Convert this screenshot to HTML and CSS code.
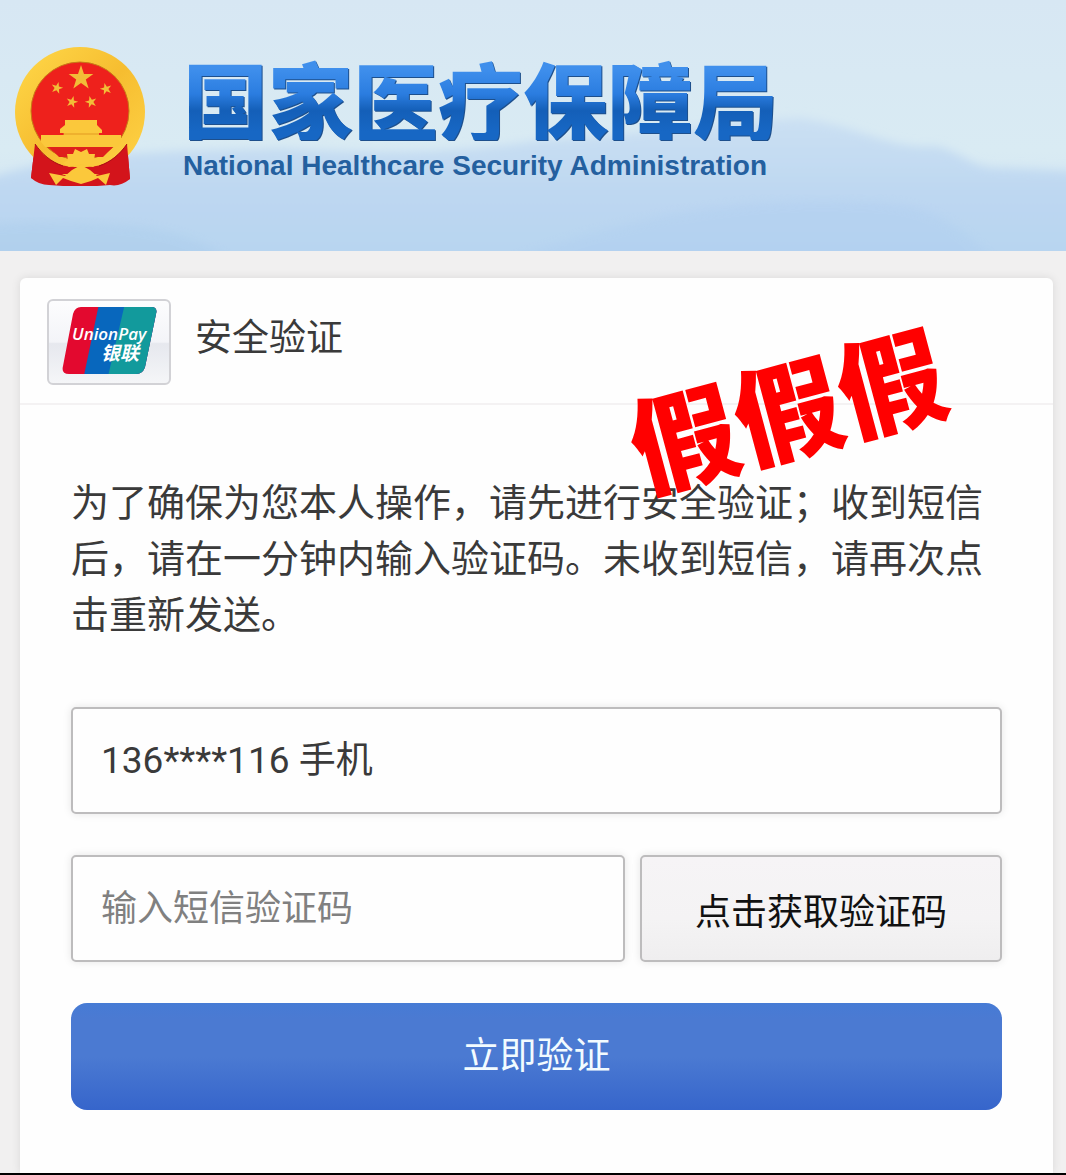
FILE: index.html
```
<!DOCTYPE html>
<html lang="zh-CN">
<head>
  <meta charset="UTF-8">
  <meta name="viewport" content="width=device-width, initial-scale=1.0">
  <title>假假假</title>
  <link rel="stylesheet" href="styles.css">
</head>
<body>
  <header class="header">
    <!-- Hills behind the title -->
    <svg class="hills" viewBox="0 0 1066 251" preserveAspectRatio="none" aria-hidden="true">
      <defs>
        <linearGradient id="hill" x1="0" y1="0" x2="0" y2="1">
          <stop offset="0" stop-color="#cbe0f3"/>
          <stop offset=".5" stop-color="#bdd7f1"/>
          <stop offset="1" stop-color="#b5d4f0"/>
        </linearGradient>
        <filter id="soft"><feGaussianBlur stdDeviation="5"/></filter>
      </defs>
      <path d="M-20 182 C60 150 170 152 280 148 C400 156 480 150 540 140 C640 134 730 122 800 118 C860 126 890 150 935 146 C965 152 970 170 1005 168 L1090 172 V275 H-20Z" fill="url(#hill)" filter="url(#soft)"/>
      <path d="M-20 225 C80 217 190 220 235 265 H-20Z" fill="#a9cbeb" opacity=".4" filter="url(#soft)"/>
      <path d="M500 265 C620 215 760 195 860 202 C930 200 960 225 1000 265Z" fill="#aecdf0" opacity=".4" filter="url(#soft)"/>
    </svg>
    <svg class="emblem" viewBox="0 0 132 142" aria-hidden="true">
      <defs>
        <linearGradient id="gold" x1="0" y1="0" x2="1" y2="1">
          <stop offset="0" stop-color="#ffd94a"/>
          <stop offset=".5" stop-color="#f6bd30"/>
          <stop offset="1" stop-color="#ffd447"/>
        </linearGradient>
        <path id="star" d="M0-10 2.3-3.1H9.5L3.7 1.2 5.9 8.1 0 3.8-5.9 8.1-3.7 1.2-9.5-3.1H-2.3Z"/>
      </defs>
      <path d="M20 98 L112 98 L115 133 Q105 141 95 139 L82 140 H48 L34 139 Q24 139 16 132Z" fill="#d3141b"/>
      <ellipse cx="65" cy="66" rx="65" ry="65" fill="url(#gold)"/>
      <circle cx="65" cy="65" r="49" fill="#ee211c" stroke="#c77b17" stroke-width="1"/>
      <g fill="#f2bd38">
        <use href="#star" transform="translate(66 32) scale(1.3)"/>
        <use href="#star" transform="translate(42 42) rotate(15) scale(.62)"/>
        <use href="#star" transform="translate(91 43) rotate(-15) scale(.62)"/>
        <use href="#star" transform="translate(57 56) rotate(15) scale(.62)"/>
        <use href="#star" transform="translate(76 56) rotate(-15) scale(.62)"/>
      </g>
      <path d="M50 74 H82 V79 L87 84 V87 H84 V89 H106 V96 L103 101 H30 L26 96 V89 H49 V87 H45 V83 L50 79Z" fill="#fbc83b"/>
      <path d="M48 88H84" stroke="#e39a22" stroke-width="1"/>
      <path d="M34 101 H98 L88 111 H44Z" fill="#df201c"/>
      <path d="M20 98 C29 112 43 121 60 121 H72 C89 121 102 112 112 98 L115 133 L96 138 L84 128 H48 L36 138 L16 132Z" fill="#d3141b"/>
      <path d="M34 127 L50 130 L57 124 L66 119 L75 124 L82 130 L95 127 L91 139 L83 132 L76 135 L66 138 L56 135 L48 132 L41 139Z" fill="#fbc83b"/>
      <path d="M48 117 L53 114 L52 108 L58 108 L60 103 L66 106 L72 103 L74 108 L80 108 L79 114 L84 117 L78 121 L66 118 L54 121Z" fill="#fbc83b"/>
      <path d="M20 98 C27 108 36 116 48 120 M112 98 C105 108 96 116 84 120" stroke="#a90e14" stroke-width="1" fill="none"/>
    </svg>
    <div class="brand">
      <h1>国家医疗保障局</h1>
      <p>National Healthcare Security Administration</p>
    </div>
  </header>

  <main class="card">
    <div class="card-title">
      <svg class="pay-logo" viewBox="0 0 124 86" role="img" aria-label="UnionPay 银联">
        <defs>
          <linearGradient id="plate" x1="0" y1="0" x2="0" y2="1">
            <stop offset="0" stop-color="#fdfdfe"/>
            <stop offset=".5" stop-color="#f3f4f8"/>
            <stop offset=".52" stop-color="#e6e8ee"/>
            <stop offset="1" stop-color="#f5f6f8"/>
          </linearGradient>
          <clipPath id="slab">
            <path d="M34 8 H104 Q111 8 109 15 L98 68 Q96 75 89 75 H22 Q14 75 16 67 L26 15 Q28 8 34 8Z"/>
          </clipPath>
        </defs>
        <rect x="1" y="1" width="122" height="84" rx="5" fill="url(#plate)" stroke="#d2d2d6" stroke-width="2"/>
        <g clip-path="url(#slab)">
          <path d="M0 0 H124 V86 H0Z" fill="#e3092f"/>
          <path d="M53 0 H124 V86 H35Z" fill="#0867bd"/>
          <path d="M79 0 H124 V86 H59Z" fill="#129a9c"/>
        </g>
        <text class="pay-en" x="25" y="41">UnionPay</text>
        <text class="pay-cn" x="54" y="61">银联</text>
      </svg>
      <h2>安全验证</h2>
      <span class="stamp">假假假</span>
    </div>
    <div class="card-body">
      <p class="notice">为了确保为您本人操作，请先进行安全验证；收到短信后，请在一分钟内输入验证码。未收到短信，请再次点击重新发送。</p>
      <div class="fields">
        <input type="text" class="field phone" value="136****116 手机" aria-label="手机" readonly>
        <div class="row">
          <input type="text" class="field code" placeholder="输入短信验证码" aria-label="输入短信验证码">
          <button type="button" class="get-code">点击获取验证码</button>
        </div>
        <button type="button" class="submit">立即验证</button>
      </div>
    </div>
  </main>
</body>
</html>
```

FILE: styles.css
```
* {
  box-sizing: border-box;
}
body {
  margin: 0;
  min-height: 100vh;
  display: flex;
  flex-direction: column;
  font-family: Roboto, "Noto Sans CJK SC", sans-serif;
  font-size: 38px;
  color: #3a3a3a;
  background-color: #f1f0f0;
  border-bottom: 2px solid #000000;
}
h1, h2, p {
  margin: 0;
}

/* Header */
.header {
  position: relative;
  display: flex;
  align-items: flex-start;
  gap: 36px;
  height: 251px;
  padding: 46px 15px 0;
  background: linear-gradient(#d7e7f3, #d9ebf3 60%, #cfe2f4);
  overflow: hidden;
}
.hills {
  position: absolute;
  top: 0;
  left: 0;
  width: 100%;
  height: 100%;
}
.emblem {
  position: relative;
  flex: none;
  width: 132px;
  height: 142px;
}
.brand {
  position: relative;
  padding-top: 10px;
  white-space: nowrap;
}
.brand h1 {
  font-family: "Noto Sans CJK SC", sans-serif;
  font-size: 85px;
  font-weight: 900;
  line-height: 84px;
  color: transparent;
  background: linear-gradient(#3f8fec 15%, #2b7de0 45%, #145fb8 65%, #1767c4 90%);
  -webkit-background-clip: text;
  background-clip: text;
  filter: drop-shadow(1px 1px 0 #1d4f8c);
}
.brand p {
  margin-top: 8px;
  font-family: "Liberation Sans", Arial, sans-serif;
  font-size: 28px;
  font-weight: bold;
  line-height: 36px;
  color: #24609f;
}

/* Card */
.card {
  flex: 1;
  margin: 27px 13px 0 20px;
  background-color: #fefefe;
  border-radius: 6px 6px 0 0;
  box-shadow: 0 0 10px rgba(0, 0, 0, 0.1);
}
.card-title {
  position: relative;
  display: flex;
  align-items: center;
  gap: 24px;
  padding: 21px 27px 18px;
  border-bottom: 2px solid #f4f2f3;
}
.card-title h2 {
  font-size: 37px;
  font-weight: 400;
  line-height: 56px;
  padding-bottom: 6px;
}
.pay-logo {
  flex: none;
  width: 124px;
  height: 86px;
}
.pay-logo text {
  fill: #ffffff;
  font-style: italic;
}
.pay-en {
  font-family: "Open Sans", sans-serif;
  font-size: 17px;
  font-weight: 600;
}
.pay-cn {
  font-family: "Noto Sans CJK SC", sans-serif;
  font-size: 19px;
  font-weight: bold;
}
.stamp {
  position: absolute;
  top: 48px;
  right: 106px;
  font-family: "Noto Sans CJK SC", sans-serif;
  font-size: 107px;
  font-weight: 900;
  line-height: 160px;
  color: #ff0000;
  white-space: nowrap;
  transform: rotate(-15deg);
  pointer-events: none;
}
.card-body {
  padding: 70px 51px 58px;
}
.notice {
  line-height: 56px;
}
.fields {
  display: grid;
  gap: 41px;
  margin-top: 64px;
}
.row {
  display: grid;
  grid-template-columns: 1fr 362px;
  gap: 15px;
}
.field, .get-code {
  width: 100%;
  min-width: 0;
  height: 107px;
  font-family: inherit;
  font-size: 36px;
  border: 2px solid #bdbcbd;
  border-radius: 5px;
  box-shadow: 0 0 8px rgba(0, 0, 0, 0.1);
}
.field {
  padding: 0 28px;
  color: #3a3a3a;
  background-color: #fefefe;
}
.phone {
  padding-bottom: 8px;
  font-size: 37px;
}
.field::placeholder {
  color: #808080;
  opacity: 1;
}
.get-code {
  padding: 0;
  color: #111111;
  background: linear-gradient(#f6f4f6, #f4f3f4 60%, #efeeef);
}
.submit {
  height: 107px;
  padding: 0 0 8px;
  font-family: inherit;
  font-size: 37px;
  color: #f2fbff;
  background: linear-gradient(#467bd5, #4b7ad2 15%, #4b7ad2 50%, #3665cb);
  border: none;
  border-radius: 16px;
}
```
